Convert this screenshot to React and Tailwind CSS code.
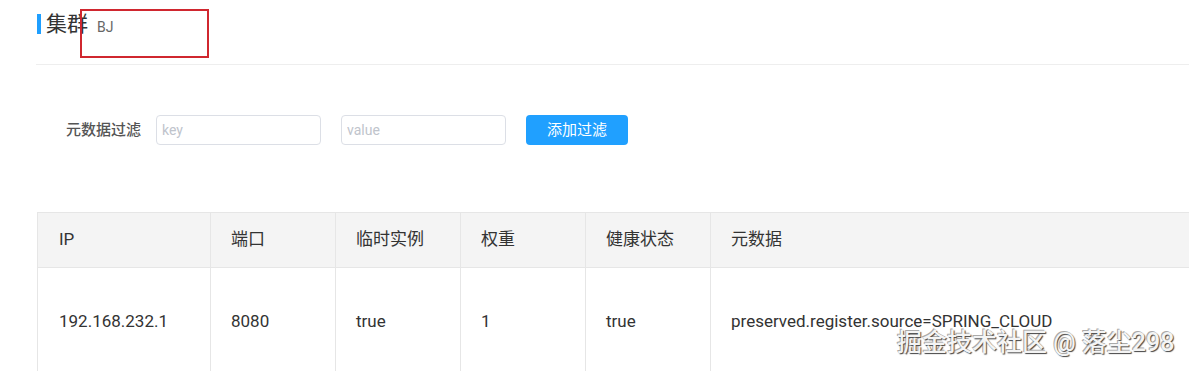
import React, { useState } from "react";

const cols = [
  { key: "ip", title: "IP", width: "w-[173px]" },
  { key: "port", title: "端口", width: "w-[125px]" },
  { key: "ephemeral", title: "临时实例", width: "w-[125px]" },
  { key: "weight", title: "权重", width: "w-[125px]" },
  { key: "healthy", title: "健康状态", width: "w-[125px]" },
  { key: "metadata", title: "元数据", width: "" },
];

const rows = [
  {
    ip: "192.168.232.1",
    port: "8080",
    ephemeral: "true",
    weight: "1",
    healthy: "true",
    metadata: "preserved.register.source=SPRING_CLOUD",
  },
];

export default function App() {
  const [filter, setFilter] = useState({ key: "", value: "" });

  return (
    <div
      className="relative w-[1189px] h-[371px] overflow-hidden bg-white text-[#333]"
      style={{ fontFamily: 'Roboto, "Noto Sans CJK SC", sans-serif' }}
    >
      {/* Cluster title */}
      <div className="flex items-center pl-[37px] pt-[14px] h-[34px]">
        <span className="w-[4px] h-[20px] bg-[#1f9fff]" />
        <span className="ml-[5px] text-[21px] leading-[20px] text-[#333]">集群</span>
        <span className="ml-[9px] mt-[6px] text-[14px] leading-[20px] text-[#666]">BJ</span>
      </div>

      {/* red annotation box */}
      <div className="absolute left-[80px] top-[9px] w-[129px] h-[49px] border-2 border-[#d0272f]" />

      <div className="ml-[36px] mt-[30px] border-t border-[#eeeeee]" />

      {/* Filter */}
      <div className="flex items-center mt-[50px] pl-[66px]">
        <label className="text-[15px] text-[#555] font-medium">元数据过滤</label>
        <input
          className="ml-[15px] w-[165px] h-[30px] px-[5px] rounded-[4px] border border-[#dcdfe6] text-[14px] placeholder:text-[#c0c4cc] outline-none"
          placeholder="key"
          value={filter.key}
          onChange={(e) => setFilter({ ...filter, key: e.target.value })}
        />
        <input
          className="ml-[20px] w-[165px] h-[30px] px-[5px] rounded-[4px] border border-[#dcdfe6] text-[14px] placeholder:text-[#c0c4cc] outline-none"
          placeholder="value"
          value={filter.value}
          onChange={(e) => setFilter({ ...filter, value: e.target.value })}
        />
        <button className="ml-[20px] w-[102px] h-[30px] rounded-[4px] bg-[#20a0ff] text-white text-[15px]">
          添加过滤
        </button>
      </div>

      {/* Table */}
      <div className="ml-[37px] mt-[67px]">
        <table className="w-[1200px] border-collapse text-[17px]">
          <thead>
            <tr className="bg-[#f4f4f4] h-[55px]">
              {cols.map((c, i) => (
                <th
                  key={c.key}
                  className={`${c.width} text-left font-normal pl-[20px] border-t border-b border-[#e6e6e6] ${
                    i === 0 ? "border-l pl-[21px]" : "border-l"
                  }`}
                >
                  {c.title}
                </th>
              ))}
            </tr>
          </thead>
          <tbody>
            {rows.map((r) => (
              <tr key={r.ip} className="h-[108px]">
                {cols.map((c) => (
                  <td key={c.key} className="pl-[20px] border-l border-b border-[#e6e6e6] first:pl-[21px]">
                    {r[c.key]}
                  </td>
                ))}
              </tr>
            ))}
          </tbody>
        </table>
      </div>

      {/* watermark */}
      <div
        className="absolute left-[897px] top-[327px] text-[25px] leading-[32px] font-medium text-[#f4f4f4] whitespace-nowrap"
        style={{ textShadow: "1px 1px 1px #444, -1px -1px 0 #aaa" }}
      >
        掘金技术社区 @ 落尘298
      </div>
    </div>
  );
}
